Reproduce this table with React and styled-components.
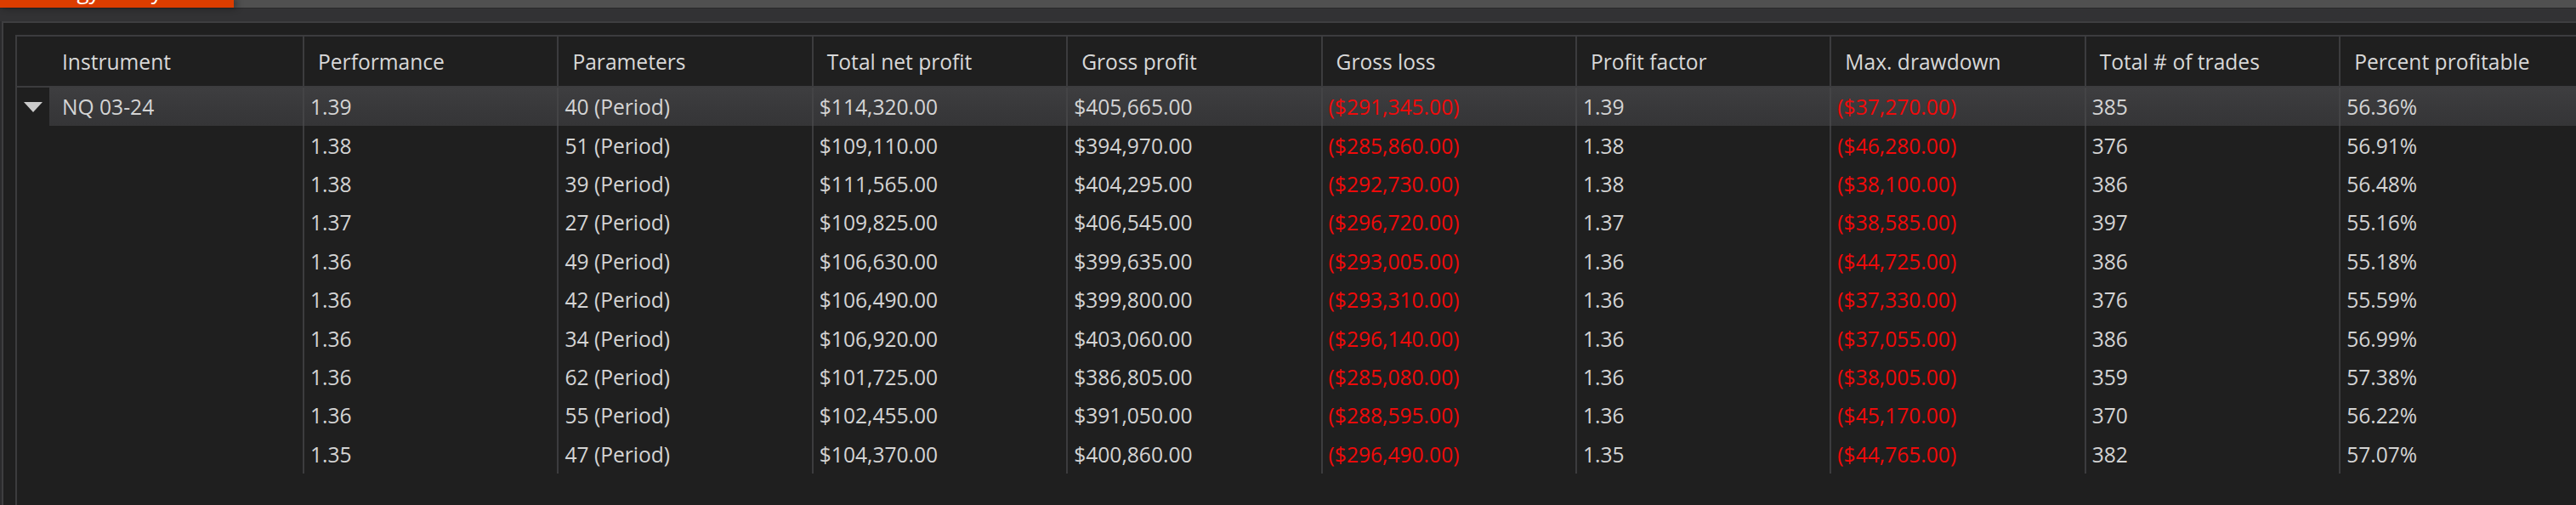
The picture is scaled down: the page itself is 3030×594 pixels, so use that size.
import React from 'react';
import styled, { createGlobalStyle } from 'styled-components';

const GlobalStyle = createGlobalStyle`
  html, body { margin: 0; padding: 0; background: #2b2b2d; overflow: hidden; }
  #root { height: 594px; }
  * { box-sizing: border-box; }
`;

const COLS = '338px repeat(8, 299.4px) minmax(0, 1fr)';
const LINE = '#3c3c3e';

const Page = styled.div`
  height: 594px;
  display: flex;
  flex-direction: column;
  font-family: "Open Sans", "Noto Sans", sans-serif;
  font-size: 24.6px;
`;

const TopBar = styled.div`
  height: 9px;
  background: #505050;
  display: flex;
  flex-shrink: 0;
`;

const Tab = styled.div`
  width: 275px;
  height: 9px;
  background: #dc3d00;
  overflow: hidden;
  display: flex;
  align-items: flex-end;
  padding-left: 18px;
  box-shadow: 3px 0 8px rgba(0, 0, 0, 0.45);
  position: relative;
  z-index: 1;
`;

const TabLabel = styled.span`
  color: #ffffff;
  font-size: 26px;
  line-height: 26px;
  margin-bottom: 7px;
  white-space: nowrap;
`;

const Band = styled.div`
  height: 16px;
  flex-shrink: 0;
  border-top: 1px solid #29292b;
  background: #323234;
`;

const Panel = styled.div`
  flex: 1;
  margin-left: 2px;
  border-left: 2px solid #3e3e40;
  border-top: 2px solid #3e3e40;
  background: #1f1f1f;
  padding: 14px 0 0 14px;
  display: flex;
  flex-direction: column;
  min-height: 0;
`;

const Grid = styled.div`
  flex: 1;
  border-left: 2px solid ${LINE};
  border-top: 2px solid ${LINE};
  display: flex;
  flex-direction: column;
  overflow: hidden;
`;

const HeaderRow = styled.div`
  display: grid;
  grid-template-columns: ${COLS};
  height: 60px;
  border-bottom: 2px solid ${LINE};
  flex-shrink: 0;
`;

const HeaderCell = styled.div`
  display: flex;
  align-items: center;
  padding-left: ${(p) => (p.$first ? '53px' : '16px')};
  border-right: ${(p) => (p.$last ? 'none' : `2px solid ${LINE}`)};
  color: #d8d8d8;
  white-space: nowrap;
  overflow: hidden;
`;

const Row = styled.div`
  display: grid;
  grid-template-columns: ${COLS};
  height: 45.4px;
  flex-shrink: 0;
  background: ${(p) =>
    p.$selected ? 'linear-gradient(#3e3e40, #38383a 60%, #353537)' : 'transparent'};
`;

const Cell = styled.div`
  display: flex;
  align-items: center;
  padding-left: 7px;
  border-right: ${(p) => (p.$last ? 'none' : `2px solid ${p.$selected ? '#444446' : LINE}`)};
  color: ${(p) => (p.$neg ? '#f00a0a' : '#d4d4d4')};
  white-space: nowrap;
  overflow: hidden;
`;

const InstrumentCell = styled.div`
  display: flex;
  align-items: stretch;
  border-right: 2px solid ${(p) => (p.$selected ? '#444446' : LINE)};
  color: #d4d4d4;
  white-space: nowrap;
`;

const Expander = styled.div`
  width: 38px;
  flex-shrink: 0;
  background: #1f1f1f;
  display: flex;
  align-items: center;
  justify-content: center;
`;

const InstrumentName = styled.div`
  display: flex;
  align-items: center;
  padding-left: 15px;
  flex: 1;
`;

const headers = [
  'Instrument',
  'Performance',
  'Parameters',
  'Total net profit',
  'Gross profit',
  'Gross loss',
  'Profit factor',
  'Max. drawdown',
  'Total # of trades',
  'Percent profitable',
];

const rows = [
  ['1.39', '40 (Period)', '$114,320.00', '$405,665.00', '($291,345.00)', '1.39', '($37,270.00)', '385', '56.36%'],
  ['1.38', '51 (Period)', '$109,110.00', '$394,970.00', '($285,860.00)', '1.38', '($46,280.00)', '376', '56.91%'],
  ['1.38', '39 (Period)', '$111,565.00', '$404,295.00', '($292,730.00)', '1.38', '($38,100.00)', '386', '56.48%'],
  ['1.37', '27 (Period)', '$109,825.00', '$406,545.00', '($296,720.00)', '1.37', '($38,585.00)', '397', '55.16%'],
  ['1.36', '49 (Period)', '$106,630.00', '$399,635.00', '($293,005.00)', '1.36', '($44,725.00)', '386', '55.18%'],
  ['1.36', '42 (Period)', '$106,490.00', '$399,800.00', '($293,310.00)', '1.36', '($37,330.00)', '376', '55.59%'],
  ['1.36', '34 (Period)', '$106,920.00', '$403,060.00', '($296,140.00)', '1.36', '($37,055.00)', '386', '56.99%'],
  ['1.36', '62 (Period)', '$101,725.00', '$386,805.00', '($285,080.00)', '1.36', '($38,005.00)', '359', '57.38%'],
  ['1.36', '55 (Period)', '$102,455.00', '$391,050.00', '($288,595.00)', '1.36', '($45,170.00)', '370', '56.22%'],
  ['1.35', '47 (Period)', '$104,370.00', '$400,860.00', '($296,490.00)', '1.35', '($44,765.00)', '382', '57.07%'],
];

const Triangle = () => (
  <svg width="22" height="12" viewBox="0 0 22 12">
    <polygon points="0,0 22,0 11,12" fill="#cbcbcb" />
  </svg>
);

export default function App() {
  return (
    <>
      <GlobalStyle />
      <Page>
        <TopBar>
          <Tab>
            <TabLabel>Strategy Analyzer</TabLabel>
          </Tab>
        </TopBar>
        <Band />
        <Panel>
          <Grid>
            <HeaderRow>
              {headers.map((h, i) => (
                <HeaderCell key={h} $first={i === 0} $last={i === headers.length - 1}>
                  {h}
                </HeaderCell>
              ))}
            </HeaderRow>
            {rows.map((r, ri) => {
              const selected = ri === 0;
              return (
                <Row key={ri} $selected={selected}>
                  {selected ? (
                    <InstrumentCell $selected>
                      <Expander>
                        <Triangle />
                      </Expander>
                      <InstrumentName>NQ 03-24</InstrumentName>
                    </InstrumentCell>
                  ) : (
                    <InstrumentCell />
                  )}
                  {r.map((v, ci) => (
                    <Cell
                      key={ci}
                      $selected={selected}
                      $neg={v.startsWith('(')}
                      $last={ci === r.length - 1}
                    >
                      {v}
                    </Cell>
                  ))}
                </Row>
              );
            })}
          </Grid>
        </Panel>
      </Page>
    </>
  );
}
